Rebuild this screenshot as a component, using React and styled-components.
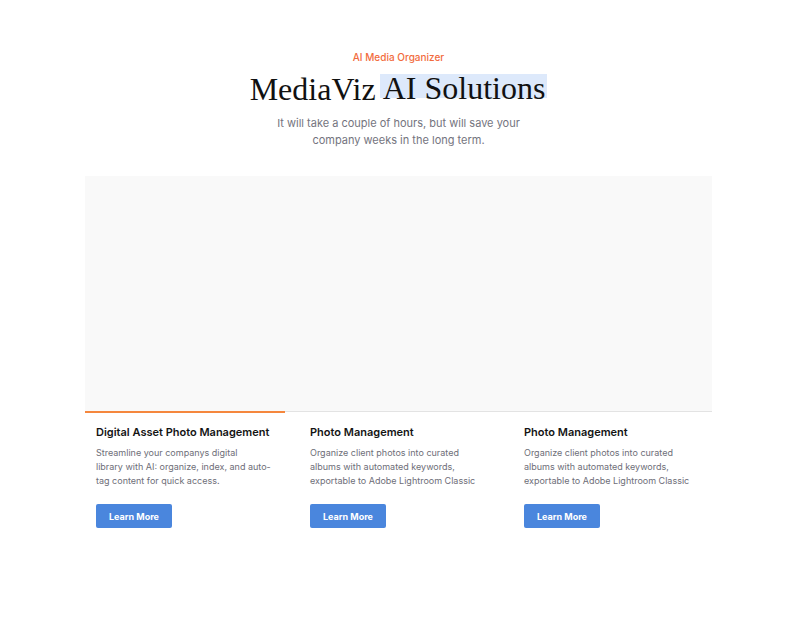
import React from "react";
import styled, { createGlobalStyle } from "styled-components";

const Global = createGlobalStyle`
  body {
    margin: 0;
    background: #ffffff;
    font-family: Inter, "Noto Sans", sans-serif;
  }
`;

const Pagina = styled.div`
  width: 790px;
  min-height: 621px;
  padding: 50px 0 0 7px;
  box-sizing: border-box;
`;

const Encabezado = styled.header`
  display: flex;
  flex-direction: column;
  align-items: center;
  text-align: center;
`;

const Etiqueta = styled.div`
  color: #f26b3d;
  font-size: 10px;
  font-weight: 500;
  line-height: 14px;
`;

const Titulo = styled.h1`
  margin: 7px 0 0;
  font-family: "Liberation Serif", "DejaVu Serif", serif;
  font-weight: 400;
  font-size: 32px;
  line-height: 36px;
  color: #111111;
`;

const Resaltado = styled.span`
  display: inline-block;
  background: #dde9fb;
  height: 24px;
  line-height: 28px;
  margin-left: -4px;
  padding: 0 2px 0 3px;
  vertical-align: 1px;
`;

const Subtitulo = styled.p`
  margin: 8px 0 0;
  width: 250px;
  color: #74747e;
  font-size: 11px;
  line-height: 17px;
`;

const Panel = styled.div`
  width: 627px;
  height: 235px;
  margin: 27px auto 0;
  background: #f9f9f9;
`;

const Pestanas = styled.div`
  width: 627px;
  margin: 0 auto;
  display: grid;
  grid-template-columns: repeat(3, 1fr);
  column-gap: 15px;
  border-top: 1px solid #e3e3e3;
`;

const Pestana = styled.div`
  position: relative;
  padding: 12px 11px 0;
  &::before {
    content: "";
    position: absolute;
    top: -1.5px;
    left: 0;
    width: 200px;
    height: 2px;
    background: ${(p) => (p.$activa ? "#f5873d" : "transparent")};
  }
`;

const TituloTarjeta = styled.h3`
  margin: 0;
  font-size: 11px;
  font-weight: 600;
  line-height: 16px;
  color: #141414;
  white-space: nowrap;
`;

const Descripcion = styled.p`
  margin: 6px 0 0;
  font-size: 9px;
  line-height: 14px;
  color: #6e6e78;
  white-space: pre-line;
`;

const Boton = styled.button`
  display: block;
  margin-top: 16px;
  width: 76px;
  height: 24px;
  border: none;
  border-radius: 2px;
  background: #4a86dd;
  color: #ffffff;
  font-family: Inter, sans-serif;
  font-size: 9px;
  font-weight: 700;
  cursor: pointer;
`;

const tarjetas = [
  {
    titulo: "Digital Asset Photo Management",
    texto:
      "Streamline your companys digital\nlibrary with AI: organize, index, and auto-\ntag content for quick access.",
  },
  {
    titulo: "Photo Management",
    texto:
      "Organize client photos into curated\nalbums with automated keywords,\nexportable to Adobe Lightroom Classic",
  },
  {
    titulo: "Photo Management",
    texto:
      "Organize client photos into curated\nalbums with automated keywords,\nexportable to Adobe Lightroom Classic",
  },
];

const App = () => {
  return (
    <>
      <Global />
      <Pagina>
        <Encabezado>
          <Etiqueta>AI Media Organizer</Etiqueta>
          <Titulo>
            MediaViz <Resaltado>AI Solutions</Resaltado>
          </Titulo>
          <Subtitulo>
            It will take a couple of hours, but will save your company weeks in
            the long term.
          </Subtitulo>
        </Encabezado>

        <Panel />

        <Pestanas>
          {tarjetas.map((t, i) => (
            <Pestana key={i} $activa={i === 0}>
              <TituloTarjeta>{t.titulo}</TituloTarjeta>
              <Descripcion>{t.texto}</Descripcion>
              <Boton>Learn More</Boton>
            </Pestana>
          ))}
        </Pestanas>
      </Pagina>
    </>
  );
};

export default App;
